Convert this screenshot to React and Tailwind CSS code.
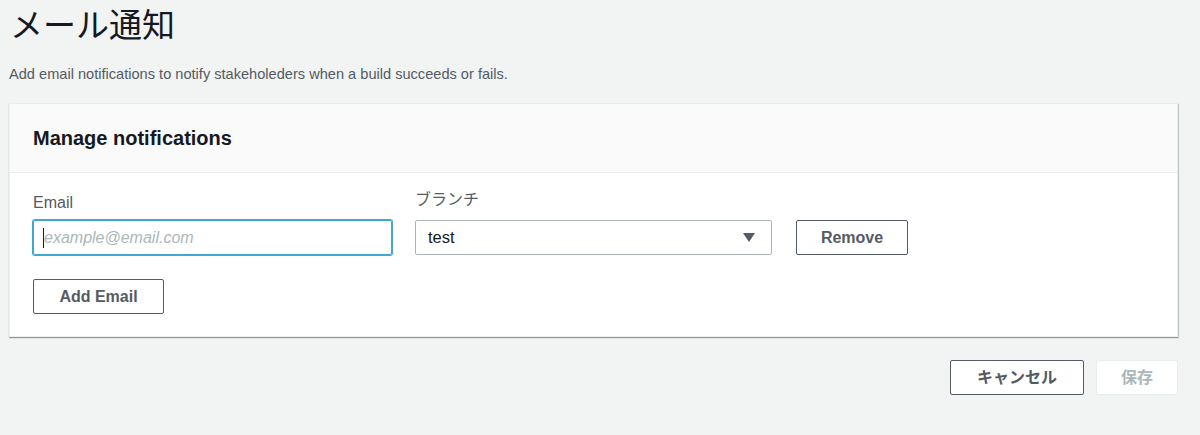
export default function App() {
  const font = {
    fontFamily: '"Liberation Sans", "Noto Sans CJK JP", sans-serif',
  };
  return (
    <div className="min-h-[435px] w-[1200px] bg-[#f2f3f3] px-[9px] pt-[6px] text-[#16191f]" style={font}>
      <h1 className="text-[33px] leading-[40px] font-normal text-[#16191f] pl-px">メール通知</h1>
      <p className="mt-[18px] text-[14.6px] leading-[20px] text-[#545b64]">
        Add email notifications to notify stakeholeders when a build succeeds or fails.
      </p>

      <div className="mt-[19px] w-[1169px] bg-white border border-[#eaeded] shadow-[0_1px_1px_0_rgba(0,28,36,0.3),1px_1px_1px_0_rgba(0,28,36,0.15)]">
        <div className="h-[69px] flex items-center px-[23px] bg-[#fafafa] border-b border-[#eaeded]">
          <h2 className="text-[20px] font-bold text-[#16191f]">Manage notifications</h2>
        </div>

        <div className="px-[23px] pt-[18px] pb-[22px]">
          <div className="flex items-end">
            <div className="w-[359px]">
              <label className="block text-[16px] leading-[22px] text-[#545b64] mb-[6px]">Email</label>
              <div className="h-[35px] rounded-[2px] border border-[#3fa7d6] shadow-[0_0_0_1px_#3fa7d6] flex items-center px-[9px]">
                <span className="w-px h-[20px] bg-[#16191f]" />
                <span className="text-[16px] italic text-[#aab7b8]">example@email.com</span>
              </div>
            </div>

            <div className="w-[357px] ml-[23px]">
              <label className="block text-[16px] leading-[22px] text-[#545b64] mb-[7px] -translate-y-[2px]">ブランチ</label>
              <div className="h-[35px] rounded-[2px] border border-[#aab7b8] flex items-center justify-between pl-[12px] pr-[16px]">
                <span className="text-[16.5px] text-[#16191f]">test</span>
                <svg width="12" height="9" viewBox="0 0 12 9">
                  <path d="M0 0h12L6 9z" fill="#545b64" />
                </svg>
              </div>
            </div>

            <button className="ml-[24px] w-[112px] h-[35px] rounded-[2px] border border-[#545b64] bg-white text-[16px] font-bold text-[#545b64]">
              Remove
            </button>
          </div>

          <button className="mt-[24px] w-[131px] h-[35px] rounded-[2px] border border-[#545b64] bg-white text-[16px] font-bold text-[#545b64]">
            Add Email
          </button>
        </div>
      </div>

      <div className="w-[1169px] flex justify-end gap-[12px] mt-[23px]">
        <button className="w-[134px] h-[35px] rounded-[2px] border border-[#545b64] bg-white text-[16px] font-bold text-[#545b64]">
          キャンセル
        </button>
        <button className="w-[82px] h-[35px] rounded-[2px] border border-[#eaeded] bg-white text-[16px] font-bold text-[#aab7b8]">
          保存
        </button>
      </div>
    </div>
  );
}
